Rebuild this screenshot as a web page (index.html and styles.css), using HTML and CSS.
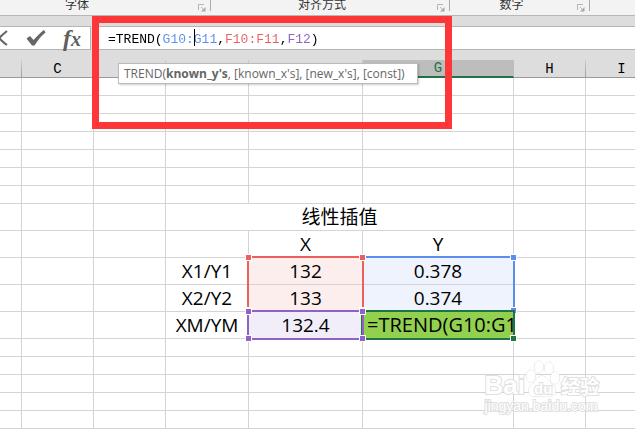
FILE: index.html
```html
<!DOCTYPE html>
<html lang="zh-CN">
<head>
<meta charset="utf-8">
<title>TREND</title>
<link rel="stylesheet" href="styles.css">
</head>
<body>
<div class="app">
  <header class="ribbon">
    <div class="group group-font"><span>字体</span><button class="launcher" aria-label="字体"><svg viewBox="0 0 8 8"><path d="M0.5 6V0.5H6M3 3L6 6"/><path class="corner" d="M7.5 3V7.500H3Z"/></svg></button></div>
    <div class="group group-align"><span>对齐方式</span><button class="launcher" aria-label="对齐方式"><svg viewBox="0 0 8 8"><path d="M0.5 6V0.5H6M3 3L6 6"/><path class="corner" d="M7.5 3V7.500H3Z"/></svg></button></div>
    <div class="group group-number"><span>数字</span><button class="launcher" aria-label="数字"><svg viewBox="0 0 8 8"><path d="M0.5 6V0.5H6M3 3L6 6"/><path class="corner" d="M7.5 3V7.500H3Z"/></svg></button></div>
  </header>

  <div class="formula-bar">
    <div class="tools">
      <button class="tool" aria-label="取消"><svg viewBox="0 0 20 20"><path class="cross" d="M3 3C7 8 11 13 17 17M17 3C12 7 7 12 3 17"/></svg></button>
      <button class="tool" aria-label="输入"><svg viewBox="0 0 20 20"><path class="check" d="M0.5 10.500L4 8L7.500 12C11 8 14 5 18 2L19.500 4.500C15 8 12 12 8.500 17.500H6Z"/></svg></button>
      <button class="tool fx" aria-label="插入函数"><span>f</span><span class="fx-x">x</span></button>
    </div>
    <div class="formula">
      <input class="formula-input" type="text" aria-label="编辑栏" spellcheck="false" value="=TREND(G10:G11,F10:F11,F12)">
      <span class="caret"></span>
      <div class="hint">TREND(<b>known_y's</b>, [known_x's], [new_x's], [const])</div>
    </div>
  </div>

  <main class="sheet-wrap">
    <table class="sheet">
      <colgroup><col class="col-b"><col class="col-s"><col class="col-s"><col class="col-e"><col class="col-f"><col class="col-g"><col class="col-s"><col></colgroup>
      <thead><tr><th></th><th>C</th><th></th><th></th><th></th><th class="active">G</th><th>H</th><th>I</th></tr></thead>
      <tbody>
        <tr><td></td><td></td><td></td><td></td><td></td><td></td><td></td><td></td></tr>
        <tr><td></td><td></td><td></td><td></td><td></td><td></td><td></td><td></td></tr>
        <tr><td></td><td></td><td></td><td></td><td></td><td></td><td></td><td></td></tr>
        <tr><td></td><td></td><td></td><td></td><td></td><td></td><td></td><td></td></tr>
        <tr><td></td><td></td><td></td><td></td><td></td><td></td><td></td><td></td></tr>
        <tr><td></td><td></td><td></td><td></td><td></td><td></td><td></td><td></td></tr>
        <tr><td></td><td></td><td></td><td></td><td></td><td></td><td></td><td></td></tr>
        <tr class="tall"><td></td><td></td><td></td><td colspan="3">线性插值</td><td></td><td></td></tr>
        <tr class="tall"><td></td><td></td><td></td><td></td><td>X</td><td>Y</td><td></td><td></td></tr>
        <tr class="tall"><td></td><td></td><td></td><td>X1/Y1</td>
          <td class="pink anchor">132<div class="range red two-rows"><i></i><i></i><i></i><i></i></div></td>
          <td class="pale-blue anchor">0.378<div class="range blue two-rows"><i></i><i></i></div></td><td></td><td></td></tr>
        <tr class="tall"><td></td><td></td><td></td><td>X2/Y2</td><td class="pink">133</td><td class="pale-blue">0.374</td><td></td><td></td></tr>
        <tr class="tall"><td></td><td></td><td></td><td>XM/YM</td>
          <td class="lilac anchor">132.4<div class="range purple"><i></i><i></i><i></i><i></i></div></td>
          <td class="editing anchor"><div class="edit-text">=TREND(G10:G11,F10:F11,F12)</div><div class="range green"><i></i></div></td><td></td><td></td></tr>
        <tr><td></td><td></td><td></td><td></td><td></td><td></td><td></td><td></td></tr>
        <tr><td></td><td></td><td></td><td></td><td></td><td></td><td></td><td></td></tr>
        <tr><td></td><td></td><td></td><td></td><td></td><td></td><td></td><td></td></tr>
        <tr><td></td><td></td><td></td><td></td><td></td><td></td><td></td><td></td></tr>
        <tr><td></td><td></td><td></td><td></td><td></td><td></td><td></td><td></td></tr>
      </tbody>
    </table>
  </main>

  <div class="highlight"></div>
  <div class="watermark">
    <div class="brand"><span>Bai</span>
      <span class="paw"><svg viewBox="0 0 34 38"><ellipse cx="5" cy="16" rx="4.500" ry="6"/><ellipse cx="13" cy="7" rx="4.500" ry="6"/><ellipse cx="23" cy="8" rx="4.500" ry="6"/><ellipse cx="29" cy="18" rx="4.500" ry="6"/><path d="M16 16C20 16 22 20 26 24C31 28 31 36 24 36.500C19 37 14 36 9 36.500C2 37 1 29 5 25C10 21 11 16 16 16Z"/></svg><em>du</em></span>
      <span class="cn">经验</span></div>
    <div class="site">jingyan.baidu.com</div>
  </div>
</div>
</body>
</html>
```
FILE: styles.css
```css
* { box-sizing: border-box; }

body {
  margin: 0;
  background: #fff;
  color: #000;
  font-family: "Open Sans", "Noto Sans CJK SC", sans-serif;
}

button {
  padding: 0;
  border: 0;
  background: none;
}

.app {
  position: relative;
  min-height: 100vh;
  overflow: hidden;
}

/* ribbon */
.ribbon {
  display: flex;
  height: 16px;
  background: #f3f3f3;
  border-bottom: 1px solid #b8b8b8;
  font: 12px/12px "Noto Sans CJK SC", sans-serif;
  color: #333;
}

.group {
  display: flex;
  flex: none;
  height: 11px;
  border-right: 1px solid #ababab;
}

.group span {
  flex: 1;
  text-align: center;
  margin-top: -2px;
}

.group-font { width: 251px; margin-left: -40px; }
.group-align { width: 239px; }
.group-number { width: 140px; }

.launcher {
  width: 12px;
  height: 8px;
  margin: 4px 0 0 4px;
  padding-right: 4px;
  display: flex;
}

.launcher svg {
  width: 8px;
  height: 8px;
  fill: none;
  stroke: #b5b5b5;
}

.launcher .corner { fill: #a8a8a8; stroke: none; }

/* formula bar */
.formula-bar {
  display: flex;
  gap: 4px;
  padding: 10px 0;
  background: #ddd;
}

.tools {
  display: flex;
  justify-content: flex-end;
  gap: 16px;
  flex: none;
  width: 91px;
  height: 24px;
  padding-right: 8px;
  background: #fff;
  border: 1px solid #b5b5b5;
  border-left: 0;
}

.tool {
  flex: none;
  width: 20px;
  height: 22px;
  color: #5f5f5f;
}

.tool svg { display: block; width: 20px; height: 20px; }
.cross { fill: none; stroke: #666; stroke-width: 2; }
.check { fill: #666; }

.fx {
  font: italic bold 24px/22px "Liberation Serif", serif;
  white-space: nowrap;
}

.fx-x { font-size: 20px; }

.formula {
  position: relative;
  flex: 1;
  height: 24px;
  background: #fff;
  border: 1px solid #b5b5b5;
  border-right: 0;
  font: 13px/22px "Liberation Mono", monospace;
}

.formula-input {
  display: block;
  width: 100%;
  height: 24px;
  padding: 0 0 0 12px;
  border: 0;
  outline: 0;
  font: inherit;
  color: transparent;
  background: linear-gradient(90deg, #000 7ch, #5b8def 7ch 14ch, #000 14ch 15ch, #ec5f5f 15ch 22ch, #000 22ch 23ch, #8e63c5 23ch 26ch, #000 26ch) content-box;
  -webkit-background-clip: text;
  background-clip: text;
}

.caret {
  position: absolute;
  left: calc(12px + 11ch);
  top: 2px;
  width: 1px;
  height: 17px;
  background: #000;
}

.hint {
  position: absolute;
  z-index: 3;
  left: 22px;
  top: 36px;
  padding: 0 12px 0 5px;
  border: 1px solid #bbb;
  background: #fff;
  box-shadow: 1px 1px 2px #0003;
  color: #666;
  font: 12px/19px "Open Sans", sans-serif;
  white-space: nowrap;
}

/* grid */
.sheet {
  width: max(100%, 658px);
  table-layout: fixed;
  border-collapse: separate;
  border-spacing: 0;
}

.col-b { width: 22px; }
.col-s { width: 72px; }
.col-e { width: 83px; }
.col-f { width: 114px; }
.col-g { width: 151px; }

.sheet th {
  height: 18px;
  padding: 0;
  background: #ddd;
  border-right: 1px solid;
  border-bottom: 1px solid #999;
  border-image: linear-gradient(#d0d0d0, #999) 1;
  font: 14px/16px "Liberation Mono", monospace;
  vertical-align: bottom;
}

.sheet th.active {
  background: #bdbdbd;
  border-image: none;
  border-right-color: #bdbdbd;
  border-bottom: 2px solid #217346;
  color: #217346;
}

.sheet td {
  height: 18px;
  padding: 0;
  border-right: 1px solid #d4d4d4;
  border-bottom: 1px solid #d4d4d4;
  text-align: center;
  white-space: nowrap;
}

.sheet .tall td {
  height: 27px;
  font-size: 19px;
  line-height: 26px;
}

.sheet .anchor { position: relative; }
.sheet .pink { background: #fdeeee; }
.sheet .pale-blue { background: #eef3fd; }
.sheet .lilac { background: #f2eef9; }
.sheet .editing { background: #92d050; }

.edit-text {
  overflow: hidden;
  padding-left: 4px;
  font-size: 20px;
  text-align: left;
}

/* range outlines */
.range {
  position: absolute;
  inset: -2px;
  border: 2px solid;
}

.two-rows { bottom: -28px; }
.red { color: #ec5f5f; z-index: 1; }
.blue { color: #5b8def; border-left: 0; }
.purple { color: #8e63c5; z-index: 3; }
.green { color: #217346; z-index: 2; }

.range i {
  position: absolute;
  width: 7px;
  height: 7px;
  border: 1px solid #fff;
  background: currentColor;
}

.range i:nth-child(1) { right: -4px; bottom: -4px; }
.range i:nth-child(2) { right: -4px; top: -4px; }
.range i:nth-child(3) { left: -4px; top: -4px; }
.range i:nth-child(4) { left: -4px; bottom: -4px; }

/* frame drawn over the formula area */
.highlight {
  position: absolute;
  z-index: 4;
  left: 92px;
  top: 16px;
  width: 360px;
  height: 113px;
  border: 7px solid #fd3737;
  pointer-events: none;
}

.watermark {
  position: absolute;
  z-index: 5;
  right: 36px;
  bottom: 15px;
  color: #fff;
  font-family: "Liberation Sans", "Noto Sans CJK SC", sans-serif;
  -webkit-text-stroke: 2px #e0e0e0;
  paint-order: stroke fill;
}

.brand {
  display: flex;
  align-items: flex-end;
  gap: 1px;
  font: bold 26px/26px "Liberation Sans", sans-serif;
}

.paw {
  position: relative;
  width: 34px;
  height: 38px;
}

.paw svg { display: block; fill: #fff; stroke: #ddd; }

.paw em {
  position: absolute;
  left: 8px;
  bottom: 0;
  font: bold 15px/18px "Liberation Sans", sans-serif;
}

.cn { font: bold 19px/24px "Noto Sans CJK SC", sans-serif; }
.site { font-size: 14px; line-height: 16px; }
```
